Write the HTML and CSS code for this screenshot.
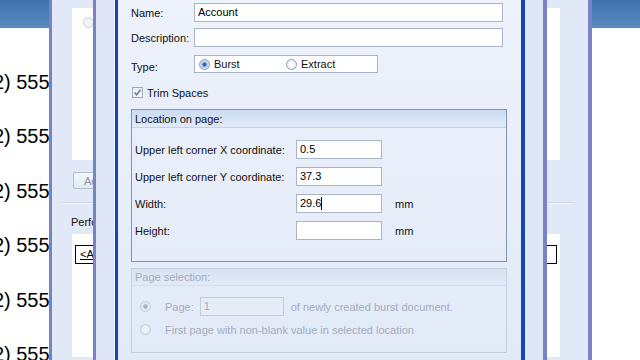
FILE: index.html
```html
<!DOCTYPE html>
<html lang="en">
<head>
    <meta charset="UTF-8">
    <title>Burst Field Properties</title>
    <link rel="stylesheet" href="styles.css">
</head>
<body>
    <!-- --- BACKGROUND WINDOW: CONTACT LIST --- -->
    <div class="contacts">
        <div class="contacts-header"></div>
        <ul class="phone-list">
            <li>(212) 555-0147</li>
            <li>(212) 555-0182</li>
            <li>(212) 555-0123</li>
            <li>(212) 555-0196</li>
            <li>(212) 555-0111</li>
            <li>(212) 555-0164</li>
        </ul>
    </div>

    <!-- --- PARENT WINDOW --- -->
    <div class="parent-window">
        <div class="white-panel top-panel">
            <span class="faded-radio"></span>
        </div>
        <button class="parent-btn">Add...</button>
        <div class="separator"></div>
        <div class="parent-label">Perform burst on:</div>
        <div class="white-panel bottom-panel">
            <div class="field-box"><u>&lt;Account&gt;</u></div>
        </div>
    </div>

    <!-- --- DIALOG --- -->
    <div class="dialog">
        <div class="frame-side left-side"></div>
        <div class="dialog-body">
            <div class="field-row">
                <label>Name:</label>
                <div class="textbox">Account</div>
            </div>
            <div class="field-row">
                <label>Description:</label>
                <div class="textbox"></div>
            </div>
            <div class="field-row type-row">
                <label>Type:</label>
                <div class="radio-box">
                    <span class="radio-opt"><span class="radio checked"></span>Burst</span>
                    <span class="radio-opt"><span class="radio"></span>Extract</span>
                </div>
            </div>
            <div class="check-row">
                <span class="checkbox">
                    <svg width="9" height="9" viewBox="0 0 9 9"><path d="M1.5 4.5 L3.6 6.8 L7.6 1.8" fill="none" stroke="#7d8794" stroke-width="1.8"/></svg>
                </span>
                Trim Spaces
            </div>

            <div class="group">
                <div class="group-head">Location on page:</div>
                <div class="group-body loc-body">
                    <div class="loc-row">
                        <span class="loc-label">Upper left corner X coordinate:</span>
                        <div class="textbox small">0.5</div>
                    </div>
                    <div class="loc-row">
                        <span class="loc-label">Upper left corner Y coordinate:</span>
                        <div class="textbox small">37.3</div>
                    </div>
                    <div class="loc-row">
                        <span class="loc-label">Width:</span>
                        <div class="textbox small">29.6<span class="caret"></span></div>
                        <span class="unit">mm</span>
                    </div>
                    <div class="loc-row">
                        <span class="loc-label">Height:</span>
                        <div class="textbox small"></div>
                        <span class="unit">mm</span>
                    </div>
                </div>
            </div>

            <div class="group disabled">
                <div class="group-head">Page selection:</div>
                <div class="group-body page-body">
                    <div class="page-row">
                        <span class="radio checked off"></span>
                        <span>Page:</span>
                        <div class="textbox page-box">1</div>
                        <span>of newly created burst document.</span>
                    </div>
                    <div class="page-row second">
                        <span class="radio off"></span>
                        <span>First page with non-blank value in selected location</span>
                    </div>
                </div>
            </div>
        </div>
        <div class="frame-side right-side"></div>
    </div>
</body>
</html>
```

FILE: styles.css
```css
/* --- RESET & GLOBAL --- */
* {
    margin: 0;
    padding: 0;
    box-sizing: border-box;
}

body {
    width: 640px;
    height: 360px;
    overflow: hidden;
    background-color: #FFFFFF;
    font-family: "Liberation Sans", Arial, sans-serif;
    font-size: 11px;
    color: #111;
    position: relative;
}

/* --- CONTACT LIST (BACK) --- */
.contacts {
    height: 360px;
    overflow: hidden;
}

.contacts-header {
    height: 28px;
    background: linear-gradient(#3E72AC, #5A8BC1);
}

.phone-list {
    list-style: none;
    padding-top: 27px;
    margin-left: -36px;
}

.phone-list li {
    font-size: 20px;
    line-height: 54.4px;
    height: 54.4px;
    color: #000;
    white-space: nowrap;
}

/* --- PARENT WINDOW --- */
.parent-window {
    position: absolute;
    left: 49px;
    top: 0;
    width: 543px;
    height: 360px;
    overflow: hidden;
    background-color: #E1E9F8;
    border-left: 3px solid #7A82C6;
    border-right: 4px solid #7A82C6;
    padding: 0 28px 0 20px;
    display: flex;
    flex-direction: column;
}

.white-panel {
    background-color: #FFFFFF;
}

.top-panel {
    margin-top: 8px;
    height: 152px;
    flex-shrink: 0;
    position: relative;
}

.faded-radio {
    position: absolute;
    left: 11px;
    top: 9px;
    width: 11px;
    height: 11px;
    border-radius: 50%;
    border: 1px solid #C9D0DB;
    background: #F1F3F7;
}

.parent-btn {
    margin-top: 12px;
    width: 220px;
    height: 17px;
    flex-shrink: 0;
    margin-left: 1px;
    border: 1px solid #B3BECE;
    border-radius: 2px;
    background: linear-gradient(#F4F7FC, #E2E9F4);
    font-family: inherit;
    font-size: 11px;
    color: #8A94A4;
    text-align: left;
    padding-left: 10px;
}

.separator {
    margin: 13px -13px 0 -10px;
    height: 2px;
    flex-shrink: 0;
    border-top: 1px solid #CDD6E4;
    border-bottom: 1px solid #F5F8FD;
}

.parent-label {
    margin-top: 12px;
    margin-left: -1px;
    line-height: 13px;
    white-space: nowrap;
    overflow: hidden;
}

.bottom-panel {
    margin-top: 5px;
    height: 123px;
    flex-shrink: 0;
    padding: 11px 3px 0 3px;
}

.field-box {
    height: 19px;
    border: 1px solid #000;
    padding: 2px 4px;
    color: #000;
}

/* --- DIALOG --- */
.dialog {
    position: absolute;
    left: 93px;
    top: 0;
    width: 454px;
    height: 360px;
    overflow: hidden;
    border-left: 3px solid #7A82C6;
    border-right: 4px solid #7A82C6;
    display: flex;
}

.frame-side {
    background-color: #DFE7F7;
}

.left-side {
    width: 19px;
    border-right: 1px solid #F0F4FC;
    border-left: 12px solid #DFE7F7;
}

.right-side {
    width: 18px;
}

.dialog-body {
    width: 410px;
    border-left: 3px solid #1546B2;
    border-right: 4px solid #1546B2;
    background: linear-gradient(#EDF2FB, #E2EAF8);
    padding: 3px 14px 0 13px;
}

/* --- FORM ROWS --- */
.field-row {
    display: grid;
    grid-template-columns: 63px 1fr;
    align-items: center;
    height: 19px;
    margin-bottom: 6px;
    margin-right: 4px;
}

.field-row label {
    white-space: nowrap;
}

.textbox {
    height: 19px;
    border: 1px solid #A9B5C7;
    background-color: #FFFFFF;
    padding: 2px 3px;
    line-height: 13px;
    color: #000;
    white-space: nowrap;
}

.type-row {
    margin-top: 8px;
    height: 18px;
    align-items: end;
}

.type-row label {
    line-height: 13px;
    margin-bottom: -1px;
}

.radio-box {
    width: 184px;
    height: 18px;
    border: 1px solid #A9B5C7;
    background-color: #FFFFFF;
    display: flex;
    align-items: center;
    padding-left: 4px;
}

.radio-opt {
    display: flex;
    align-items: center;
    gap: 4px;
    width: 87px;
}

.radio {
    width: 11px;
    height: 11px;
    border-radius: 50%;
    border: 1px solid #8D9DB4;
    background: radial-gradient(circle, #FFFFFF 30%, #DCE4EF 100%);
    flex-shrink: 0;
}

.radio.checked {
    background: radial-gradient(circle, #2D5EA9 0, #3B6DB8 28%, #B9CDEA 38%, #E4EBF5 100%);
}

.radio.off {
    border-color: #C3CBD7;
    background: radial-gradient(circle, #EEF2F7 30%, #DDE3EC 100%);
}

.radio.checked.off {
    background: radial-gradient(circle, #A9B2C0 0, #A9B2C0 28%, #E0E6EE 40%, #E8EDF3 100%);
}

.check-row {
    display: flex;
    align-items: center;
    gap: 4px;
    margin-top: 14px;
    margin-bottom: 11px;
    margin-left: 1px;
    height: 11px;
}

.checkbox {
    width: 11px;
    height: 11px;
    border: 1px solid #9AA9BE;
    background: linear-gradient(#E9EDF2, #F7F9FB);
    display: flex;
    align-items: center;
    justify-content: center;
}

/* --- GROUP BOXES --- */
.group {
    border: 1px solid #8195B0;
}

.group-head {
    height: 18px;
    line-height: 18px;
    padding-left: 3px;
    background: linear-gradient(#CADBF3, #E0EAF8);
    border-bottom: 1px solid #C3D1E6;
}

.loc-body {
    margin-top: 12px;
    padding: 0 0 21px 3px;
    display: flex;
    flex-direction: column;
    gap: 8px;
}

.loc-row {
    display: flex;
    align-items: center;
    height: 19px;
}

.loc-label {
    width: 161px;
    white-space: nowrap;
}

.textbox.small {
    width: 86px;
}

.caret {
    display: inline-block;
    width: 1px;
    height: 13px;
    background-color: #000;
    vertical-align: top;
}

.unit {
    margin-left: 13px;
    margin-top: 1px;
}

.group.disabled {
    margin-top: 6px;
    border-color: #C4D0E2;
    color: #A3ADBD;
}

.group.disabled .group-head {
    height: 17px;
    line-height: 17px;
    background: linear-gradient(#D7E2F3, #E3EAF7);
    border-bottom-color: #D3DDEC;
}

.page-body {
    padding: 11px 0 15px 8px;
}

.page-row {
    display: flex;
    align-items: center;
    height: 19px;
    gap: 6px;
}

.page-row .radio {
    margin-right: 8px;
}

.page-box {
    width: 84px;
    border-color: #C2CCDA;
    background-color: #E6ECF5;
    color: #A3ADBD;
    margin-right: 1px;
}

.page-row.second {
    margin-top: 6px;
    height: 15px;
}
```
